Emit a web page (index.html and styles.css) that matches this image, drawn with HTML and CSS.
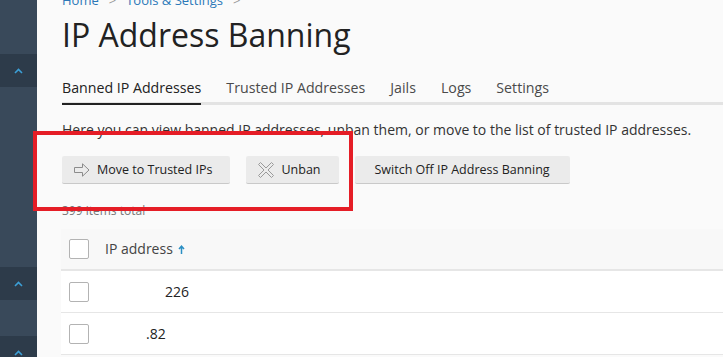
FILE: index.html
```html
<!DOCTYPE html>
<html lang="en">
<head>
    <meta charset="UTF-8">
    <meta name="viewport" content="width=device-width, initial-scale=1.0">
    <title>IP Address Banning</title>
    <link rel="stylesheet" href="styles.css">
</head>
<body>

    <!-- Left navigation strip -->
    <aside class="sidebar">
        <div class="nav-block"></div>
        <div class="nav-group">
            <svg class="chevron" width="9" height="6" viewBox="0 0 9 6"><polyline points="1,5 4.5,1.5 8,5" fill="none" stroke="#3c9fd6" stroke-width="1.6"/></svg>
        </div>
        <div class="nav-block tall"></div>
        <div class="nav-group">
            <svg class="chevron" width="9" height="6" viewBox="0 0 9 6"><polyline points="1,5 4.5,1.5 8,5" fill="none" stroke="#3c9fd6" stroke-width="1.6"/></svg>
        </div>
        <div class="nav-block mid"></div>
        <div class="nav-group last">
            <svg class="chevron" width="9" height="6" viewBox="0 0 9 6"><polyline points="1,5 4.5,1.5 8,5" fill="none" stroke="#3c9fd6" stroke-width="1.6"/></svg>
        </div>
    </aside>

    <main class="content">
        <div class="breadcrumbs">
            <a href="#">Home</a><span class="sep">&gt;</span><a href="#">Tools &amp; Settings</a><span class="sep">&gt;</span>
        </div>

        <h1 class="page-title">IP Address Banning</h1>

        <nav class="tabs">
            <a href="#" class="tab active">Banned IP Addresses</a>
            <a href="#" class="tab">Trusted IP Addresses</a>
            <a href="#" class="tab">Jails</a>
            <a href="#" class="tab">Logs</a>
            <a href="#" class="tab">Settings</a>
        </nav>

        <p class="hint">Here you can view banned IP addresses, unban them, or move to the list of trusted IP addresses.</p>

        <div class="toolbar">
            <button class="btn">
                <svg width="16" height="16" viewBox="0 0 16 16"><path d="M0.5 5.5 H8.5 V1.8 L15 8 L8.5 14.2 V10.5 H0.5 Z" fill="none" stroke="#8c8c8c" stroke-width="1"/></svg>
                Move to Trusted IPs
            </button>
            <button class="btn">
                <svg width="16" height="16" viewBox="0 0 16 16"><path d="M0.5 2.5 L2.5 0.5 L8 6 L13.5 0.5 L15.5 2.5 L10 8 L15.5 13.5 L13.5 15.5 L8 10 L2.5 15.5 L0.5 13.5 L6 8 Z" fill="none" stroke="#9a9a9a" stroke-width="1"/></svg>
                Unban
            </button>
            <button class="btn plain">Switch Off IP Address Banning</button>
        </div>

        <div class="total">399 items total</div>

        <div class="list">
            <div class="list-head">
                <span class="check"></span>
                <span class="col-title">IP address</span>
                <svg class="sort" width="7" height="9" viewBox="0 0 7 9"><path d="M3.5 9 V1.5 M1 4 L3.5 1.2 L6 4" fill="none" stroke="#2b8fc4" stroke-width="1.5"/></svg>
            </div>
            <div class="list-row">
                <span class="check"></span>
                <span class="ip"><span class="hidden-part wide"></span>226</span>
            </div>
            <div class="list-row">
                <span class="check"></span>
                <span class="ip"><span class="hidden-part"></span>.82</span>
            </div>
        </div>

        <!-- annotation frame -->
        <div class="highlight"></div>
    </main>

</body>
</html>
```

FILE: styles.css
```css
body {
    margin: 0;
    font-family: 'Open Sans', 'Liberation Sans', sans-serif;
    background: #fafafa;
    color: #222;
    display: flex;
    height: 357px;
    overflow: hidden;
}

/* Sidebar */
.sidebar {
    width: 37px;
    flex-shrink: 0;
    background: #39495a;
    display: flex;
    flex-direction: column;
    overflow: hidden;
}

.sidebar > div {
    flex-shrink: 0;
}

.nav-block {
    height: 54px;
}

.nav-block.tall {
    height: 180px;
}

.nav-block.mid {
    height: 36px;
}

.nav-group {
    height: 33px;
    background: #2d3b4a;
    display: flex;
    justify-content: center;
    align-items: center;
}

.nav-group.last {
    height: auto;
    flex: 1;
    align-items: flex-start;
    padding-top: 14px;
}

/* Main area */
.content {
    position: relative;
    flex: 1;
    padding-left: 25px;
    min-width: 0;
}

.breadcrumbs {
    margin-top: -9px;
    font-size: 13px;
    line-height: 18px;
    height: 18px;
}

.breadcrumbs a {
    color: #2b78b8;
    text-decoration: none;
}

.breadcrumbs .sep {
    color: #999;
    margin: 0 10px;
}

.page-title {
    margin: 6px 0 0;
    font-size: 32px;
    font-weight: 400;
    line-height: 40px;
    color: #222;
}

/* Tabs */
.tabs {
    margin-top: 23px;
    display: flex;
    gap: 25px;
    border-bottom: 3px solid #e3e3e3;
}

.tab {
    font-size: 14.2px;
    line-height: 20px;
    padding-bottom: 4px;
    color: #4a4a4a;
    text-decoration: none;
    margin-bottom: -3px;
    border-bottom: 3px solid transparent;
}

.tab.active {
    color: #222;
    border-bottom: 2px solid #222;
    padding-bottom: 5px;
}

.hint {
    margin: 15px 0 0;
    font-size: 14px;
    line-height: 20px;
    color: #333;
}

/* Toolbar */
.toolbar {
    margin-top: 16px;
    display: flex;
    gap: 16px;
}

.btn {
    height: 28px;
    padding: 0 18px 0 12px;
    display: flex;
    align-items: center;
    gap: 7px;
    background: #ebebeb;
    border: none;
    border-bottom: 1px solid #c9c9c9;
    border-radius: 2px;
    font-family: inherit;
    font-size: 12.5px;
    font-weight: 500;
    color: #222;
    cursor: pointer;
}

.btn.plain {
    padding: 0 20px;
}

.total {
    margin-top: 19px;
    font-size: 12px;
    line-height: 16px;
    color: #777;
}

/* List */
.list {
    margin-top: 10px;
    margin-left: -1px;
}

.list-head {
    height: 40px;
    background: #f8f8f8;
    border-bottom: 2px solid #e6e6e6;
    display: flex;
    align-items: center;
    padding-left: 8px;
}

.list-row {
    height: 41px;
    background: #fff;
    border-bottom: 1px solid #e6e6e6;
    display: flex;
    align-items: center;
    padding-left: 8px;
}

.check {
    width: 18px;
    height: 18px;
    border: 1px solid #b3b3b3;
    border-radius: 2px;
    background: #fff;
    flex-shrink: 0;
}

.col-title {
    margin-left: 16px;
    font-size: 14px;
    line-height: 20px;
    color: #444;
}

.sort {
    margin-left: 5px;
}

.ip {
    margin-left: 16px;
    font-size: 14px;
    line-height: 20px;
    color: #222;
    display: flex;
}

.hidden-part {
    display: inline-block;
    width: 41px;
}

.hidden-part.wide {
    width: 60px;
}

/* Red annotation frame */
.highlight {
    position: absolute;
    left: -4px;
    top: 131px;
    width: 312px;
    height: 72px;
    border: 4px solid #e51d26;
}
```
